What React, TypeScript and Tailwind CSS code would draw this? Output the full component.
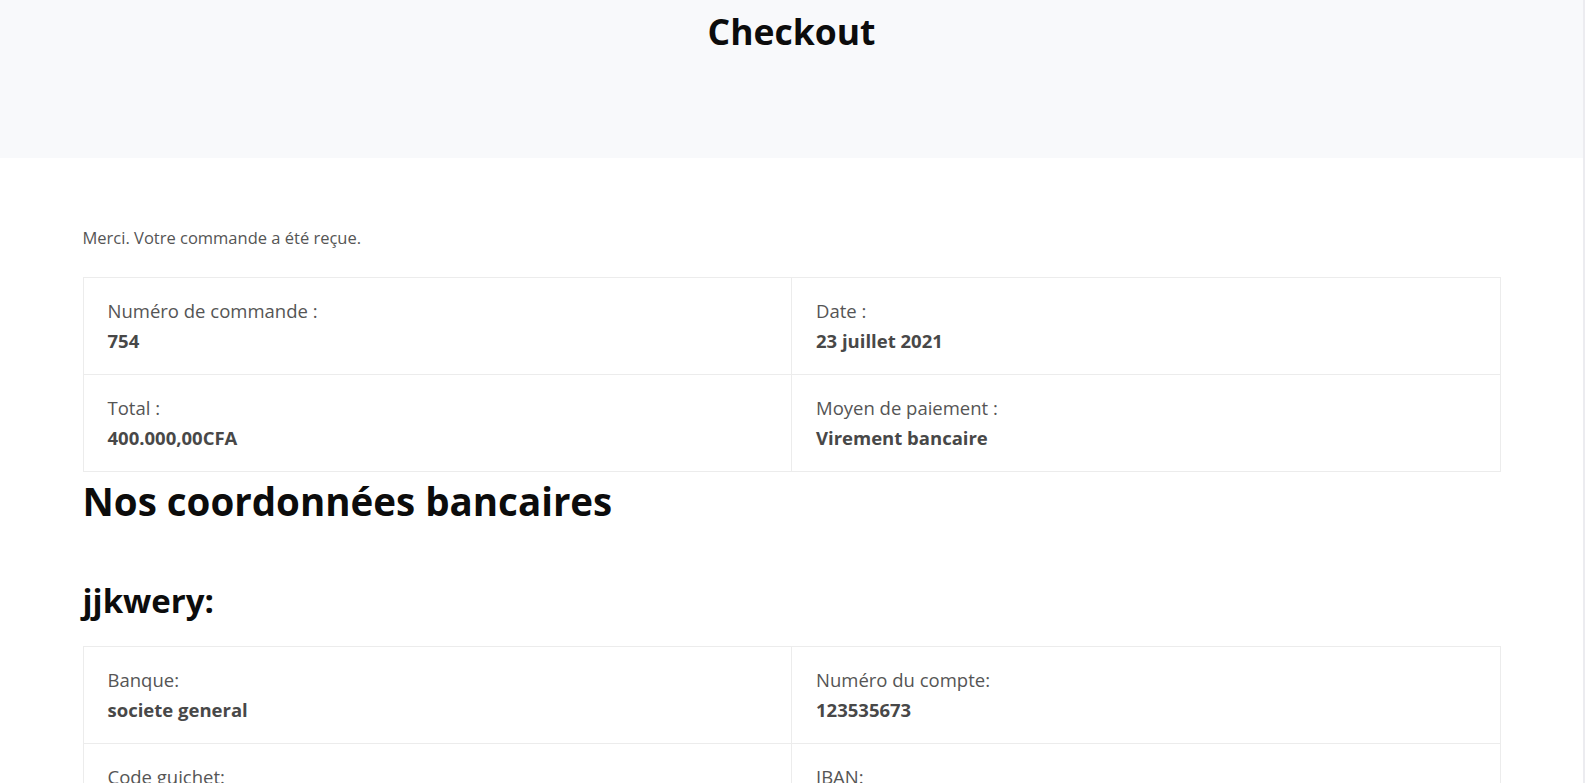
import React from "react";

const font = { fontFamily: '"Open Sans", "Noto Sans", sans-serif' };

function Cell({ label, value, right }: { label: string; value: string; right?: boolean }) {
  return (
    <div className={`flex-1 px-[24px] py-[18px] ${right ? "border-l border-[#ececec]" : ""}`}>
      <div className="text-[18.5px] leading-[30px] text-[#555555] font-normal">{label}</div>
      <div className="text-[18.5px] leading-[30px] text-[#484848] font-bold min-h-[30px]">{value}</div>
    </div>
  );
}

function Table({ rows }: { rows: [string, string, string, string][] }) {
  return (
    <div className="border border-[#ececec]">
      {rows.map((r, i) => (
        <div key={i} className={`flex ${i > 0 ? "border-t border-[#ececec]" : ""}`}>
          <Cell label={r[0]} value={r[1]} />
          <Cell label={r[2]} value={r[3]} right />
        </div>
      ))}
    </div>
  );
}

export default function App() {
  return (
    <div className="flex w-[1585px] h-[783px] overflow-hidden bg-white" style={font}>
      <div className="w-[1583px] flex flex-col">
        <div className="h-[158px] shrink-0 bg-[#f8f9fb] flex justify-center">
          <h1 className="text-[35.5px] leading-[44px] font-bold text-[#0c0c0c] mt-[9px]">Checkout</h1>
        </div>
        <div className="w-[1418px] mx-auto shrink-0">
          <p className="text-[16.5px] leading-[22px] text-[#555555] mt-[69px]">Merci. Votre commande a été reçue.</p>
          <div className="mt-[28px]">
            <Table
              rows={[
                ["Numéro de commande :", "754", "Date :", "23 juillet 2021"],
                ["Total :", "400.000,00CFA", "Moyen de paiement :", "Virement bancaire"],
              ]}
            />
          </div>
          <h2 className="text-[38.5px] leading-[48px] font-bold text-[#0c0c0c] mt-[5px]">Nos coordonnées bancaires</h2>
          <h3 className="text-[33px] leading-[40px] font-bold text-[#0c0c0c] mt-[56px]">jjkwery:</h3>
          <div className="mt-[25px]">
            <Table
              rows={[
                ["Banque:", "societe general", "Numéro du compte:", "123535673"],
                ["Code guichet:", "", "IBAN:", ""],
              ]}
            />
          </div>
        </div>
      </div>
      <div className="w-[2px] bg-[#ececf0]" />
    </div>
  );
}
